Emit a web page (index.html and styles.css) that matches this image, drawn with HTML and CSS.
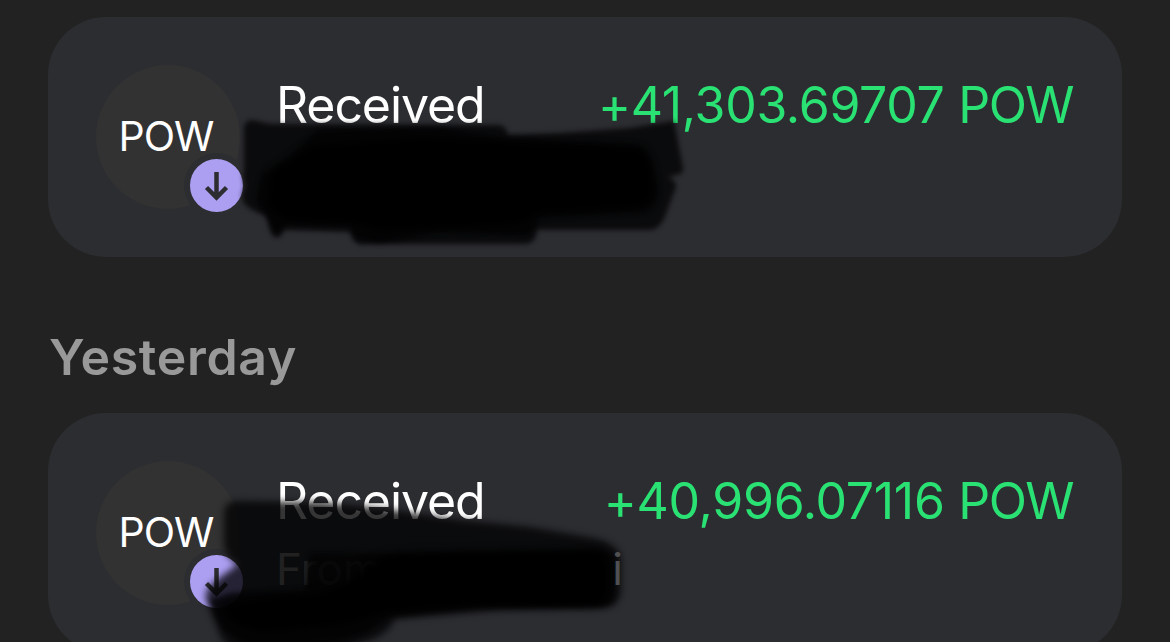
FILE: index.html
```
<!DOCTYPE html>
<html lang="en">
<head>
    <meta charset="UTF-8">
    <meta name="viewport" content="width=device-width, initial-scale=1.0">
    <title>Activity</title>
    <link rel="stylesheet" href="styles.css">
</head>
<body>
    <main class="activity">
        <div class="card">
            <div class="token">
                <span class="token-name">POW</span>
                <span class="token-badge">
                    <svg width="53" height="53" viewBox="0 0 53 53">
                        <path d="M26.5 13V38M16.500 28.500L26.500 38.500L36.500 28.500" />
                    </svg>
                </span>
            </div>
            <div class="details">
                <div class="title">Received</div>
            </div>
            <div class="amount">+41,303.69707 <span class="symbol">POW</span></div>

            <!-- Marker strokes over the sender -->
            <svg class="marker" viewBox="48 17 1074 240">
                <path class="soft" d="M244 126Q246 120 252 120L270 124L500 125Q507 127 508 135L560 133L630 128L674 121L683 168Q684 174 676 175L668 177Q676 180 676 187L664 219Q658 230 650 230H537Q536 243 526 244H366Q354 247 350 232L284 230Q281 238 276 237Q270 236 268 220L265 215Q250 211 244 203Q240 196 245 186Q242 178 244 170Z" />
                <path class="soft" d="M290 156L318 129L440 128L505 138L560 141L635 144Q648 147 652 162L658 186Q660 202 645 212L540 218L530 236L440 232L380 243L356 240L350 226L286 224L276 236L266 215L256 200L262 175Z" />
                <path class="solid" d="M272 172L312 146L420 138L560 145L640 149Q648 154 651 172L652 196Q646 206 631 207L540 212L518 224L380 230L352 222L285 220L268 206Z" />
            </svg>
        </div>

        <h2 class="day">Yesterday</h2>

        <div class="card">
            <div class="token">
                <span class="token-name">POW</span>
                <span class="token-badge">
                    <svg width="53" height="53" viewBox="0 0 53 53">
                        <path d="M26.5 13V38M16.500 28.500L26.500 38.500L36.500 28.500" />
                    </svg>
                </span>
            </div>
            <div class="details">
                <div class="title">Received</div>
                <div class="sender"><span>From</span><span class="sender-end">i</span></div>
            </div>
            <div class="amount">+40,996.07116 <span class="symbol">POW</span></div>

            <!-- Marker strokes over the sender -->
            <svg class="marker" viewBox="48 413 1074 240">
                <path class="soft fade" d="M224 514Q224 501 238 501L320 502L380 508L420 514L460 520L530 527L594 538Q618 543 621 558V592Q618 608 602 608L500 610L395 619Q387 638 360 643L330 660H245L222 640L206 600Q204 590 214 582L238 564Q223 556 224 540Z" />
                <path class="soft" d="M310 553L400 554L600 549Q614 552 614 565V595Q612 606 598 606L480 607L390 616L365 634L310 650H250L222 628L210 600L232 593L305 590Z" />
                <path class="solid" d="M380 558L400 554L596 551Q606 553 607 565V594Q606 604 594 605L470 605L385 612L345 624L260 632L232 622L222 606L250 600L316 594L345 584Z" />
            </svg>
        </div>
    </main>
</body>
</html>
```
FILE: styles.css
```
* {
    margin: 0;
    padding: 0;
    box-sizing: border-box;
}

body {
    font-family: Inter, "Liberation Sans", sans-serif;
    background: #222222;
    color: #ffffff;
    height: 642px;
    overflow: hidden;
}

.activity {
    padding: 17px 48px 0;
}

/* Transaction card */
.card {
    position: relative;
    display: flex;
    align-items: flex-start;
    height: 240px;
    padding: 48px 49px 48px 48px;
    border-radius: 58px;
    background: #2c2d31;
}

.token {
    position: relative;
    display: flex;
    flex-shrink: 0;
    align-items: center;
    justify-content: center;
    width: 144px;
    height: 144px;
    padding-right: 4px;
    border-radius: 50%;
    background: #323232;
}

.token-name {
    font-size: 41px;
    line-height: 50px;
    letter-spacing: -1px;
    padding-bottom: 3px;
}

.token-badge {
    position: absolute;
    right: -3px;
    bottom: -3px;
    width: 53px;
    height: 53px;
    border-radius: 50%;
    background: #ac9ff2;
    box-shadow: 0 0 0 6px #2c2d31;
}

.token-badge svg {
    display: block;
    fill: none;
    stroke: #2c2d31;
    stroke-width: 4.5;
}

.details {
    flex: 1;
    min-width: 0;
    padding: 10px 0 0 36px;
}

.title,
.amount {
    font-size: 50px;
    line-height: 60px;
    letter-spacing: -1.1px;
    white-space: nowrap;
}

.amount {
    padding-top: 10px;
    letter-spacing: -0.3px;
    color: #2ae273;
}

.symbol {
    letter-spacing: -1.6px;
}

.sender {
    display: flex;
    justify-content: space-between;
    width: 347px;
    padding-top: 10px;
    font-size: 44px;
    line-height: 56px;
    letter-spacing: 0;
    color: #999999;
}

.sender-end {
    position: relative;
    z-index: 1;
    color: #505052;
}

/* Day heading */
.day {
    padding: 70px 0 26px 1px;
    font-size: 50px;
    font-weight: 600;
    line-height: 60px;
    letter-spacing: 0.7px;
    color: #999999;
}

/* Marker strokes */
.marker {
    position: absolute;
    top: 0;
    left: 0;
    width: 1074px;
    height: 240px;
    overflow: visible;
}

.soft {
    fill: #020204;
    fill-opacity: 0.8;
    filter: blur(2.5px);
}

.fade {
    filter: blur(3.5px);
}

.solid {
    fill: #000000;
    filter: blur(5px);
}
```
